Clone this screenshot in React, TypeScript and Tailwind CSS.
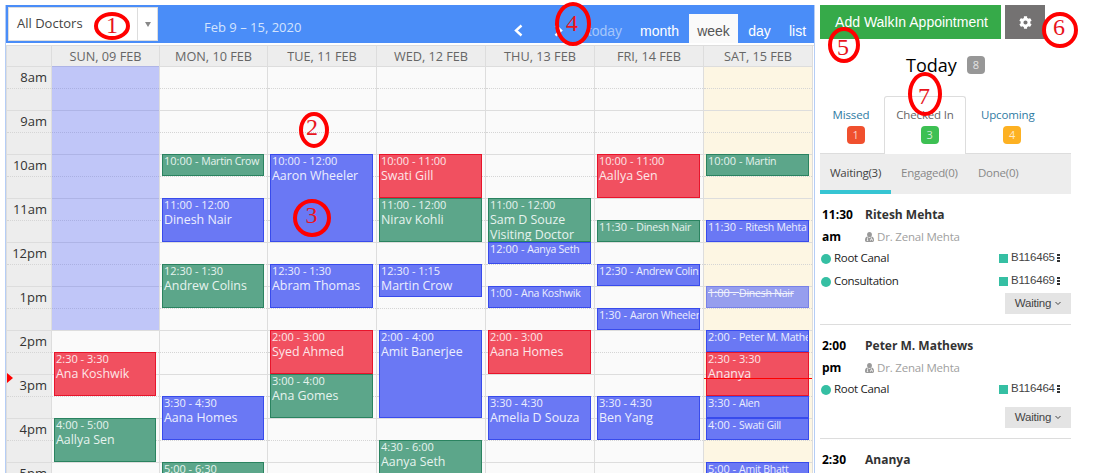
import React from 'react';
import { FaCog } from 'react-icons/fa';

type Tone = 'blue' | 'green' | 'red' | 'faded';

interface CalendarEvent {
  // quarter hours counted from 8am
  start: number;
  span: number;
  time: string;
  name: string;
  tone: Tone;
}

interface Day {
  label: string;
  cell: string;
  events: CalendarEvent[];
}

const tones: Record<Tone, string> = {
  blue: 'border-[#384bec] bg-[#6a78f4] text-[#eceefe]',
  green: 'border-[#2a8360] bg-[#5ca68a] text-[#e6f3ee]',
  red: 'border-[#e8142b] bg-[#f15060] text-[#fde6e8]',
  faded: 'border-[#7781e8] bg-[#969eee] text-[#f0f1fc] line-through',
};

const days: Day[] = [
  {
    label: 'SUN, 09 FEB',
    cell: 'bg-[#fafafa]',
    events: [
      { start: 26, span: 4, time: '2:30 - 3:30', name: 'Ana Koshwik', tone: 'red' },
      { start: 32, span: 4, time: '4:00 - 5:00', name: 'Aallya Sen', tone: 'green' },
    ],
  },
  {
    label: 'MON, 10 FEB',
    cell: 'bg-[#fafafa]',
    events: [
      { start: 8, span: 2, time: '10:00', name: 'Martin Crow', tone: 'green' },
      { start: 12, span: 4, time: '11:00 - 12:00', name: 'Dinesh Nair', tone: 'blue' },
      { start: 18, span: 4, time: '12:30 - 1:30', name: 'Andrew Colins', tone: 'green' },
      { start: 30, span: 4, time: '3:30 - 4:30', name: 'Aana Homes', tone: 'blue' },
      { start: 36, span: 6, time: '5:00 - 6:30', name: '', tone: 'green' },
    ],
  },
  {
    label: 'TUE, 11 FEB',
    cell: 'bg-[#fafafa]',
    events: [
      { start: 8, span: 8, time: '10:00 - 12:00', name: 'Aaron Wheeler', tone: 'blue' },
      { start: 18, span: 4, time: '12:30 - 1:30', name: 'Abram Thomas', tone: 'blue' },
      { start: 24, span: 4, time: '2:00 - 3:00', name: 'Syed Ahmed', tone: 'red' },
      { start: 28, span: 4, time: '3:00 - 4:00', name: 'Ana Gomes', tone: 'green' },
    ],
  },
  {
    label: 'WED, 12 FEB',
    cell: 'bg-[#fafafa]',
    events: [
      { start: 8, span: 4, time: '10:00 - 11:00', name: 'Swati Gill', tone: 'red' },
      { start: 12, span: 4, time: '11:00 - 12:00', name: 'Nirav Kohli', tone: 'green' },
      { start: 18, span: 3, time: '12:30 - 1:15', name: 'Martin Crow', tone: 'blue' },
      { start: 24, span: 8, time: '2:00 - 4:00', name: 'Amit Banerjee', tone: 'blue' },
      { start: 34, span: 6, time: '4:30 - 6:00', name: 'Aanya Seth', tone: 'green' },
    ],
  },
  {
    label: 'THU, 13 FEB',
    cell: 'bg-[#fafafa]',
    events: [
      { start: 12, span: 4, time: '11:00 - 12:00', name: 'Sam D Souze Visiting Doctor', tone: 'green' },
      { start: 16, span: 2, time: '12:00', name: 'Aanya Seth', tone: 'blue' },
      { start: 20, span: 2, time: '1:00', name: 'Ana Koshwik', tone: 'blue' },
      { start: 24, span: 4, time: '2:00 - 3:00', name: 'Aana Homes', tone: 'red' },
      { start: 30, span: 4, time: '3:30 - 4:30', name: 'Amelia D Souza', tone: 'blue' },
    ],
  },
  {
    label: 'FRI, 14 FEB',
    cell: 'bg-[#fafafa]',
    events: [
      { start: 8, span: 4, time: '10:00 - 11:00', name: 'Aallya Sen', tone: 'red' },
      { start: 14, span: 2, time: '11:30', name: 'Dinesh Nair', tone: 'green' },
      { start: 18, span: 2, time: '12:30', name: 'Andrew Colins', tone: 'blue' },
      { start: 22, span: 2, time: '1:30', name: 'Aaron Wheeler', tone: 'blue' },
      { start: 30, span: 4, time: '3:30 - 4:30', name: 'Ben Yang', tone: 'blue' },
    ],
  },
  {
    label: 'SAT, 15 FEB',
    cell: 'bg-[#fdf6e3]',
    events: [
      { start: 8, span: 2, time: '10:00', name: 'Martin', tone: 'green' },
      { start: 14, span: 2, time: '11:30', name: 'Ritesh Mehta', tone: 'blue' },
      { start: 20, span: 2, time: '1:00', name: 'Dinesh Nair', tone: 'faded' },
      { start: 24, span: 2, time: '2:00', name: 'Peter M. Mathews', tone: 'blue' },
      { start: 26, span: 4, time: '2:30 - 3:30', name: 'Ananya', tone: 'red' },
      { start: 30, span: 2, time: '3:30', name: 'Alen', tone: 'blue' },
      { start: 32, span: 2, time: '4:00', name: 'Swati Gill', tone: 'blue' },
      { start: 36, span: 2, time: '5:00', name: 'Amit Bhatt', tone: 'blue' },
    ],
  },
];

const hours = ['8am', '9am', '10am', '11am', '12pm', '1pm', '2pm', '3pm', '4pm', '5pm'];

const queue = [
  {
    time: '11:30',
    half: 'am',
    name: 'Ritesh Mehta',
    doctor: 'Dr. Zenal Mehta',
    items: [
      { label: 'Root Canal', bill: 'B116465' },
      { label: 'Consultation', bill: 'B116469' },
    ],
  },
  {
    time: '2:00',
    half: 'pm',
    name: 'Peter M. Mathews',
    doctor: 'Dr. Zenal Mehta',
    items: [{ label: 'Root Canal', bill: 'B116464' }],
  },
  { time: '2:30', half: 'pm', name: 'Ananya', doctor: 'Dr. Zenal Mehta', items: [] },
];

// numbered markers that sit on top of the screen
const markers = [
  { n: 1, x: 94, y: 12, w: 36, h: 28, tx: 106, ty: 33 },
  { n: 2, x: 299, y: 112, w: 30, h: 36, tx: 306, ty: 135 },
  { n: 3, x: 293, y: 199, w: 38, h: 38, tx: 305.5, ty: 223 },
  { n: 4, x: 555, y: 2, w: 36, h: 44, tx: 566, ty: 31 },
  { n: 5, x: 828, y: 27, w: 32, h: 36, tx: 837, ty: 55 },
  { n: 6, x: 1042, y: 12, w: 36, h: 36, tx: 1053, ty: 35 },
  { n: 7, x: 908, y: 72, w: 34, h: 44, tx: 918, ty: 104 },
];

function EventBox({ event }: { event: CalendarEvent }) {
  return (
    <div
      className={`mr-[3px] ml-[2px] overflow-hidden border pl-px ${tones[event.tone]}`}
      style={{ gridRow: `${event.start + 1} / span ${event.span}` }}
    >
      {event.span <= 2 ? (
        <div className="text-[11px] leading-[12px] whitespace-nowrap">
          {event.time} - <span className="text-[10.5px] tracking-[-0.25px]">{event.name}</span>
        </div>
      ) : (
        <>
          <div className="text-[11px] leading-[12px] whitespace-nowrap">{event.time}</div>
          <div className="mt-px text-[12.4px] leading-[15px]">{event.name}</div>
        </>
      )}
    </div>
  );
}

function Slots({ cell }: { cell: string }) {
  return (
    <div className={`[grid-area:1/1] ${cell}`}>
      {hours.map((hour) => (
        <div key={hour}>
          <div className="h-[22px] border-t border-[#dddddd]" />
          <div className="h-[22px] border-t border-dotted border-[#d5d5d5]" />
        </div>
      ))}
    </div>
  );
}

function Calendar() {
  return (
    <div className="h-[468px] w-[810px] shrink-0 overflow-hidden border-x border-[#b5cdf5]">
      <div className="flex h-[38px] bg-[#4a8df8] text-white">
        <div className="mt-[2px] ml-[2px] flex h-[34px] w-[150px] items-center border border-[#dddddd] bg-white text-[#444]">
          <span className="flex-1 pl-[8px] text-[13px]">All Doctors</span>
          <span className="flex h-full w-[20px] items-center justify-center border-l border-[#dddddd]">
            <svg width="6" height="5" viewBox="0 0 6 5">
              <path d="M0 0h6L3 5z" fill="#888" />
            </svg>
          </span>
        </div>
        <div className="ml-[46px] w-[110px] pt-[13px] text-[13px] leading-[18px] whitespace-nowrap text-[#d3e3fd]">
          Feb 9 – 15, 2020
        </div>
        <svg className="mt-[19px] ml-[199px]" width="10" height="13" viewBox="0 0 10 13">
          <path d="M8.5 1.5L3 6.5l5.5 5" fill="none" stroke="#fff" strokeWidth="2.4" />
        </svg>
        <svg className="mt-[19px] ml-[31px]" width="10" height="13" viewBox="0 0 10 13">
          <path d="M1.5 1.5L7 6.5l-5.5 5" fill="none" stroke="#fff" strokeWidth="2.4" />
        </svg>
        <div className="mt-[9px] ml-auto flex h-[29px] font-['Liberation_Sans',sans-serif] text-[14px] leading-[34px]">
          <span className="px-[9px] text-[#a4c6fb]">today</span>
          <span className="pr-[10px] pl-[9px]">month</span>
          <span className="w-[49px] bg-[#fafafa] text-center text-[#555]">week</span>
          <span className="w-[43px] text-center">day</span>
          <span className="w-[33px] pl-[8px]">list</span>
        </div>
      </div>

      <div className="mt-[2px] flex border-t border-[#dddddd]">
        <div className="relative w-[46px] border-x border-[#dddddd] bg-[#ededed]">
          <div className="h-[20px]" />
          {hours.map((hour) => (
            <div key={hour}>
              <div className="h-[22px] border-t border-[#dddddd] pr-[4px] text-right text-[13px] leading-[21px] text-[#333]">
                {hour}
              </div>
              <div className="h-[22px] border-t border-dotted border-[#d5d5d5]" />
            </div>
          ))}
          <svg className="absolute top-[327px] left-0" width="6" height="10" viewBox="0 0 6 10">
            <path d="M0 0l6 5-6 5z" fill="#f00" />
          </svg>
        </div>
        {days.map((day, i) => (
          <div key={day.label} className={`border-r border-[#dddddd] ${i < 2 ? 'w-[108px]' : 'w-[109px]'}`}>
            <div className="h-[20px] bg-[#ededed] text-center text-[12.7px] leading-[21px] text-[#666]">{day.label}</div>
            <div className="relative grid">
              <Slots cell={day.cell} />
              {i === 0 && <div className="z-10 h-[264px] bg-[#6a78f4]/40 [grid-area:1/1]" />}
              <div className="z-10 grid auto-rows-[11px] [grid-area:1/1]">
                {day.events.map((event) => (
                  <EventBox key={event.start} event={event} />
                ))}
              </div>
              {i === 6 && <div className="absolute inset-x-0 top-[312px] z-20 h-px bg-[#f00]" />}
            </div>
          </div>
        ))}
      </div>
    </div>
  );
}

function Badge({ color, value }: { color: string; value: number }) {
  return (
    <span className={`flex h-[18px] w-[18px] items-center justify-center rounded-[4px] text-[11px] text-white/75 ${color}`}>
      {value}
    </span>
  );
}

function DoctorIcon() {
  return (
    <svg width="9" height="10" viewBox="0 0 9 10" fill="#999">
      <path d="M4.5 0a2.3 2.5 0 0 1 0 5.2 2.3 2.5 0 0 1 0-5.2z" />
      <path d="M2.2 4.6C.7 5 0 6.3 0 8.3 0 9.5.6 10 1.5 10h6C8.4 10 9 9.500 9 8.300 9 6.300 8.300 5 6.800 4.600L4.500 6z" />
      <path d="M2.500 5.500v3M1.800 8.500h1.400M6.500 5.500v1.500M5.500 8.700V7.400h2v1.300" fill="none" stroke="#fff" strokeWidth=".7" />
    </svg>
  );
}

function Sidebar() {
  return (
    <div className="ml-[5px] w-[251px] shrink-0">
      <div className="flex gap-[4px] font-['Liberation_Sans',sans-serif] text-white">
        <button className="h-[34px] w-[181px] bg-[#36aa49] pl-[2px] text-[14px] whitespace-nowrap">
          Add WalkIn Appointment
        </button>
        <button className="flex h-[34px] w-[40px] items-center justify-center bg-[#747272]">
          <FaCog className="h-[13px] w-[13px]" />
        </button>
      </div>

      <div className="mt-[12px] flex h-[28px] items-center justify-center gap-[10px]">
        <span className="text-[18px] leading-[28px] text-black">Today</span>
        <Badge color="bg-[#979797]" value={8} />
      </div>

      <div className="mt-[17px] flex h-[58px] text-[11.5px] tracking-[-0.15px] text-[#2f7ba3]">
        <div className="flex w-[64px] flex-col items-center border-b border-[#dddddd] pt-[9px] pr-[2px]">
          <span className="leading-[20px]">Missed</span>
          <div className="mt-px pl-[9px]"><Badge color="bg-[#f0502e]" value={1} /></div>
        </div>
        <div className="flex w-[82px] flex-col items-center rounded-t-[3px] border border-b-0 border-[#dddddd] pt-[8px] text-[#666]">
          <span className="leading-[20px]">Checked In</span>
          <div className="mt-px pl-[9px]"><Badge color="bg-[#3dc053]" value={3} /></div>
        </div>
        <div className="flex flex-1 flex-col items-start border-b border-[#dddddd] pt-[9px] pl-[15px]">
          <span className="leading-[20px]">Upcoming</span>
          <div className="mt-px pl-[22px]"><Badge color="bg-[#fdb122]" value={4} /></div>
        </div>
      </div>

      <div className="flex h-[40px] bg-[#ededed] text-[11.5px] leading-[37px] tracking-[-0.25px] text-[#888]">
        <span className="w-[71px] border-b-4 border-[#36c5d3] pl-[10px] text-[#444]">Waiting(3)</span>
        <span className="w-[77px] pl-[10px]">Engaged(0)</span>
        <span className="pl-[10px]">Done(0)</span>
      </div>

      {queue.map((entry) => (
        <div key={entry.time} className="flex h-[114px] flex-col border-b border-[#dddddd] pt-[10px] has-[.two]:h-[131px]">
          <div className="flex leading-[22px]">
            <div className="w-[45px] pl-[2px] text-[12px] font-bold text-black">
              <div>{entry.time}</div>
              <div>{entry.half}</div>
            </div>
            <div>
              <div className="text-[12px] font-bold text-[#333]">{entry.name}</div>
              <div className="flex items-center gap-[3px] text-[11.5px] tracking-[-0.2px] text-[#a0a0a0]">
                <DoctorIcon />
                {entry.doctor}
              </div>
            </div>
          </div>
          {entry.items.map((item, i) => (
            <div
              key={item.label}
              className={`flex h-[20px] items-center text-[11.5px] tracking-[-0.3px] text-[#222] ${i > 0 ? 'two mt-[3px]' : ''}`}
            >
              <span className="mt-[2px] mr-[3px] ml-px h-[10px] w-[10px] rounded-full bg-[#35bfa3]" />
              <span className="flex-1">{item.label}</span>
              <span className="mr-[3px] h-[9px] w-[9px] bg-[#35bfa3]" />
              <span className="w-[46px] font-['Liberation_Sans',sans-serif] text-[11.5px] tracking-[-0.2px] text-[#444]">
                {item.bill}
              </span>
              <svg className="mr-[11px]" width="3" height="10" viewBox="0 0 3 10">
                <path d="M0 1h3v2H0zM0 4h3v2H0zM0 7h3v2H0z" fill="#333" />
              </svg>
            </div>
          ))}
          <button className="mt-auto mb-[10px] ml-auto flex h-[21px] w-[66px] shrink-0 items-center justify-center gap-[4px] bg-[#e4e4e4] font-['Liberation_Sans',sans-serif] text-[11.5px] tracking-[-0.2px] text-[#444]">
            Waiting
            <svg width="6" height="5" viewBox="0 0 6 5">
              <path d="M.5 1L3 3.5 5.5 1" fill="none" stroke="#444" strokeWidth="1" />
            </svg>
          </button>
        </div>
      ))}
    </div>
  );
}

export default function App() {
  return (
    <div className="relative h-[473px] w-[1106px] overflow-hidden bg-white font-['Open_Sans',sans-serif]">
      <div className="flex pt-[5px] pl-[5px]">
        <Calendar />
        <Sidebar />
      </div>
      <svg className="pointer-events-none absolute inset-0 z-30" width="1106" height="473">
        {markers.map((m) => (
          <g key={m.n}>
            <ellipse
              cx={m.x + m.w / 2}
              cy={m.y + m.h / 2}
              rx={m.w / 2 - 2}
              ry={m.h / 2 - 2}
              fill="none"
              stroke="#f00"
              strokeWidth="4"
            />
            <text x={m.tx} y={m.ty} fill="#e8141c" fontSize="24" className="font-['Liberation_Serif',serif]">
              {m.n}
            </text>
          </g>
        ))}
      </svg>
    </div>
  );
}
